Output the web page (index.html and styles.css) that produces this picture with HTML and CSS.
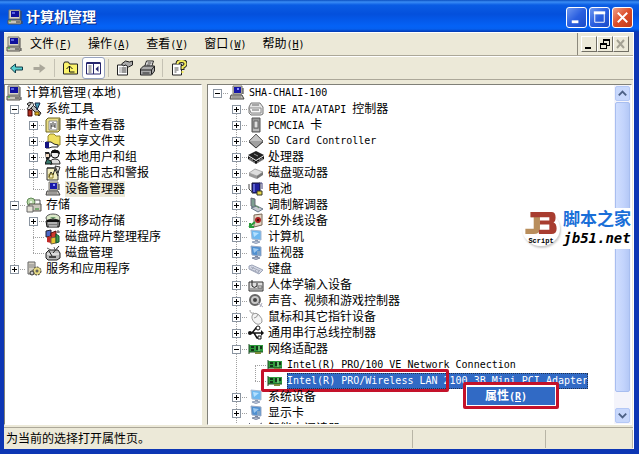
FILE: index.html
```html
<!DOCTYPE html>
<html lang="zh-CN">
<head>
    <meta charset="UTF-8">
    <meta name="viewport" content="width=device-width, initial-scale=1.0">
    <title>计算机管理</title>
    <link rel="stylesheet" href="styles.css">
</head>
<body>
    <!-- Icon sprite -->
    <svg class="sprite" xmlns="http://www.w3.org/2000/svg">
        <symbol id="i-pc" viewBox="0 0 16 16">
            <path d="M2 1h11v9H2z" fill="#d8d4c8" stroke="#77746c"/><path d="M4 2h8v6H4z" fill="#10109c"/><path d="M5 3h3v2H5z" fill="#5a62e0"/>
            <path d="M1 11h13v4H1z" fill="#c9c5bb" stroke="#55524c"/><path d="M9 13h4" stroke="#333"/><path d="M2 12h2" stroke="#2a2"/><path d="M14 2v9M15 12v3" stroke="#444"/>
        </symbol>
        <symbol id="i-device" viewBox="0 0 16 16">
            <path d="M4 1h9v8H4z" fill="#d8d4c8" stroke="#77746c"/><path d="M5 2h7v6H5z" fill="#1818a8"/><path d="M8 3h2v2H8z" fill="#8a92ff"/>
            <path d="M2 10h11l2 4H1z" fill="#c4c0b8" stroke="#444"/><path d="M3 12h9" stroke="#777"/><path d="M14 3v6" stroke="#333"/>
        </symbol>
        <symbol id="i-tools" viewBox="0 0 16 16">
            <path d="M1 3l3-2 11 11-2 3z" fill="#b8b8b8" stroke="#222"/><path d="M6 1l2 3-5 5-2-1z" fill="#ddd" stroke="#333"/>
            <path d="M9 2h5l-3 7z" fill="#4aa0b8" stroke="#124"/><path d="M2 9h4v6H2z" fill="#b03020" stroke="#400"/><path d="M9 11h4v3H9z" fill="#e0b820" stroke="#640"/>
        </symbol>
        <symbol id="i-event" viewBox="0 0 16 16">
            <path d="M3 1h12v12l-2 2H1V3z" fill="#e9dd84" stroke="#6f6620"/><path d="M4 4h8v9H4z" fill="#fff" stroke="#888"/>
            <path d="M6 6v6M8 5v3M10 6v5M6 9h4" stroke="#333"/><path d="M14 2v11" stroke="#555"/>
        </symbol>
        <symbol id="i-share" viewBox="0 0 16 16">
            <path d="M3 3l2-2h4l2 2h4v9H3z" fill="#f0e060" stroke="#94862a"/><path d="M1 9h5l3 2 4 1v2H7l-3 1H1z" fill="#fff" stroke="#222"/><path d="M0 9h4v6H0z" fill="#141480"/>
        </symbol>
        <symbol id="i-users" viewBox="0 0 16 16">
            <circle cx="10" cy="5" r="4" fill="#eee" stroke="#111"/><path d="M6 4q1-4 5-3 4 0 4 4l-3-1z" fill="#111"/><path d="M5 15q0-5 5-5 5 0 5 5z" fill="#ddd" stroke="#222"/>
            <path d="M0 3h4l2 4-2 3H1z" fill="#222"/><path d="M1 5h3v3H1z" fill="#f3d9c0"/><path d="M0 15l2-5 4 2 1 3z" fill="#38786c" stroke="#111"/>
        </symbol>
        <symbol id="i-perf" viewBox="0 0 16 16">
            <path d="M2 3h11v12H2z" fill="#f4eec0" stroke="#333"/><path d="M3 2v2M5 2v2M7 2v2M9 2v2M11 2v2" stroke="#222"/>
            <path d="M4 12l2-5 2 3 2-6 3 7" fill="none" stroke="#222"/><path d="M10 1l5 1-2 6z" fill="#ddd" stroke="#333"/><path d="M4 9h4v4H4z" fill="none" stroke="#8a7a20"/>
        </symbol>
        <symbol id="i-storage" viewBox="0 0 16 16">
            <circle cx="5" cy="5" r="4" fill="#b9d9a8" stroke="#628a58"/><circle cx="5" cy="5" r="1" fill="#fff"/>
            <path d="M3 7h12v7H3z" fill="#cbc8bd" stroke="#55524c"/><path d="M1 9h6v6H1z" fill="#e4e1d6" stroke="#666"/><path d="M9 12h4" stroke="#282"/><path d="M8 3h6v4" stroke="#555" fill="none"/>
        </symbol>
        <symbol id="i-removable" viewBox="0 0 16 16">
            <ellipse cx="8" cy="5" rx="7" ry="4" fill="#dce8c8" stroke="#555"/><path d="M5 4h6l-3 2z" fill="#6ca06c"/><path d="M1 8q7-4 14 0l-1 6H2z" fill="#777" stroke="#111"/><path d="M3 10h9M4 13h8" stroke="#eee"/><path d="M2 8h12" stroke="#111" stroke-width="2"/>
        </symbol>
        <symbol id="i-defrag" viewBox="0 0 16 16">
            <path d="M1 2l5-1v6l-5 1z" fill="#4d69c8" stroke="#223"/><path d="M6 4l5-2v6l-5 1z" fill="#cf3a2c" stroke="#511"/><path d="M2 8l4-1v7l-4-1z" fill="#c02a28"/>
            <path d="M6 9l5-1v6l-5 1z" fill="#e8c630" stroke="#764"/><path d="M11 5l3 2v6l-3 1z" fill="#3c9a4c" stroke="#153"/><path d="M13 1v3M12 3h3" stroke="#555"/>
        </symbol>
        <symbol id="i-disk" viewBox="0 0 16 16">
            <path d="M1 8l3-3h9l2 3v5l-3 2H3l-2-2z" fill="#bbb" stroke="#222"/><path d="M2 9h12" stroke="#fff"/><path d="M4 6l3 5M14 1l-6 7" stroke="#222"/><path d="M2 3l4 2M9 2l1 3" stroke="#666"/><path d="M4 12h7" stroke="#444" stroke-width="2"/>
        </symbol>
        <symbol id="i-service" viewBox="0 0 16 16">
            <path d="M2 1h7v12H2z" fill="#d4d0c4" stroke="#666"/><path d="M3 4h5M3 6h5" stroke="#888"/>
            <circle cx="11" cy="10" r="4" fill="#e6da84" stroke="#333" stroke-dasharray="2 1"/><circle cx="11" cy="10" r="1" fill="#fff" stroke="#333"/><circle cx="6" cy="12" r="2" fill="#ccc" stroke="#333"/>
        </symbol>
        <symbol id="i-ide" viewBox="0 0 16 16">
            <path d="M3 2h9l3 4v7l-2 1H3l-2-2V6z" fill="#e4e4e4" stroke="#777"/><path d="M1 7h12v5H3z" fill="#f8f8f8" stroke="#888"/><path d="M4 4h7M4 9h7" stroke="#666"/>
        </symbol>
        <symbol id="i-pcmcia" viewBox="0 0 16 16">
            <path d="M4 1h8v14H4z" fill="#989898" stroke="#555"/><path d="M6 4h4v7H6z" fill="#ddd" stroke="#666"/><path d="M5 13h6" stroke="#ddd"/>
        </symbol>
        <symbol id="i-sd" viewBox="0 0 16 16">
            <path d="M8 1l7 7-7 7-7-7z" fill="#a0a0a0" stroke="#666"/><path d="M8 2l6 6H2z" fill="#c4c4c4"/><path d="M1 9l7 6 7-6" fill="none" stroke="#444"/>
        </symbol>
        <symbol id="i-cpu" viewBox="0 0 16 16">
            <path d="M8 2l8 4-8 5-8-5z" fill="#222"/><path d="M0 7l8 5 8-5v3l-8 5-8-5z" fill="#111"/><path d="M2 9v3M4 10v3M6 12v2M10 12v2M12 10v3M14 9v3" stroke="#bbb"/><path d="M6 5l4 2" stroke="#999"/>
        </symbol>
        <symbol id="i-drive" viewBox="0 0 16 16">
            <path d="M1 8l6-4 8 3-6 4z" fill="#ddd" stroke="#aaa"/><path d="M1 8l8 3v3l-8-3z" fill="#999"/><path d="M9 11l6-4v3l-6 4z" fill="#777"/>
        </symbol>
        <symbol id="i-battery" viewBox="0 0 16 16">
            <path d="M4 2h8v10H4z" fill="#20209c" stroke="#113"/><path d="M6 3v8" stroke="#98a4ff"/><path d="M1 3v5l4 4" fill="none" stroke="#444"/><path d="M9 10h5v4H9z" fill="#e8d848" stroke="#332"/><path d="M11 2h3v6" fill="none" stroke="#3c3c78"/>
        </symbol>
        <symbol id="i-modem" viewBox="0 0 16 16">
            <path d="M3 1l4 1v9l-4-2z" fill="#7c9e90" stroke="#667"/><path d="M3 11l6-2 6 3-5 3z" fill="#c4c8d0" stroke="#678"/><path d="M7 8l4 3" stroke="#585"/>
        </symbol>
        <symbol id="i-ir" viewBox="0 0 16 16">
            <path d="M6 2l8-1v11l-8 2z" fill="#e4d6c4" stroke="#765"/><circle cx="10" cy="7" r="3" fill="#a82020"/><circle cx="10" cy="7" r="1" fill="#300"/><path d="M1 14l6-5M2 10v4h4" stroke="#2a9a3a" stroke-width="2" fill="none"/>
        </symbol>
        <symbol id="i-monitor" viewBox="0 0 16 16">
            <path d="M3 1l10 1v9l-9-1z" fill="#6db8f0" stroke="#a8b8d0"/><path d="M5 3l6 1-5 4z" fill="#b4e0ff"/><path d="M7 11h3v2H7z" fill="#8a98b0"/><path d="M4 13q4-2 8 0-4 3-8 0z" fill="#c4cce0" stroke="#93a0b8"/>
        </symbol>
        <symbol id="i-display" viewBox="0 0 16 16">
            <path d="M3 1l10 1v9l-9-1z" fill="#4f8fd0" stroke="#98a8c4"/><path d="M5 3l6 1-5 4z" fill="#9cc8f0"/><path d="M9 6h3v4H9z" fill="#7fa4c8"/><path d="M7 11h3v2H7z" fill="#78859c"/><path d="M4 13q4-2 8 0-4 3-8 0z" fill="#b8c0d4" stroke="#808ca4"/>
        </symbol>
        <symbol id="i-keyboard" viewBox="0 0 16 16">
            <path d="M1 5l3-1 11 5-4 4L1 8z" fill="#d4d8e4" stroke="#9ca4b8"/><path d="M3 6l9 4M2 8l9 4M6 6l-2 2M9 8l-2 2M12 9l-2 2" stroke="#a4aabb"/>
        </symbol>
        <symbol id="i-hid" viewBox="0 0 16 16">
            <path d="M1 5h14v9H1z" fill="#ddd" stroke="#333"/><path d="M2 12h12" stroke="#666"/><path d="M4 3v6q2 3 5 0V6" fill="none" stroke="#222"/><path d="M10 9h4v2h-4z" fill="#fff" stroke="#666"/>
        </symbol>
        <symbol id="i-sound" viewBox="0 0 16 16">
            <circle cx="7" cy="7" r="5" fill="#c8c8c8" stroke="#666" stroke-width="2"/><circle cx="7" cy="7" r="2" fill="#444"/><path d="M10 10l5 4M12 14l2-4" stroke="#aab"/>
        </symbol>
        <symbol id="i-mouse" viewBox="0 0 16 16">
            <path d="M5 5q3-2 6 1 4 4 3 7-3 4-7 1-5-5-2-9z" fill="#f4f4f4" stroke="#999"/><path d="M6 9q3 0 4-4M6 4Q2 5 2 1" fill="none" stroke="#999"/>
        </symbol>
        <symbol id="i-usb" viewBox="0 0 16 16">
            <path d="M1 8h13M4 8l4-5h3M6 8l3 5h3" fill="none" stroke="#111" stroke-width="1.5"/><path d="M13 5l3 3-3 3z" fill="#111"/><circle cx="2" cy="8" r="2" fill="#111"/><circle cx="10" cy="3" r="2" fill="#fff" stroke="#111"/><path d="M10 11h3v3h-3z" fill="#fff" stroke="#111"/>
        </symbol>
        <symbol id="i-nic" viewBox="0 0 16 16">
            <path d="M1 4h14v7H1z" fill="#2e9a3c"/><path d="M1 3v10M1 11h14" stroke="#1d4a22"/><path d="M3 5h3v2H3zM8 5h2v4H8zM12 5h2v3h-2zM3 8h3v2H3z" fill="#15351a"/><path d="M7 11h6v2H7z" fill="#7c8c3c"/><path d="M11 5v5" stroke="#9fe0a0"/>
        </symbol>
        <symbol id="i-card" viewBox="0 0 16 16">
            <path d="M1 2l5 5 8-5M5 3l6 7M2 8h9" fill="none" stroke="#667"/>
        </symbol>
    </svg>

    <div class="window">
        <!-- Title bar -->
        <header class="title-bar">
            <svg class="icon"><use href="#i-pc"/></svg>
            <h1>计算机管理</h1>
            <div class="caption-buttons">
                <button class="caption" aria-label="最小化"><svg viewBox="0 0 20 20"><path d="M5 13h7v3H5z" fill="#fff"/></svg></button>
                <button class="caption" aria-label="最大化"><svg viewBox="0 0 20 20"><path d="M5 6h10v9H5z" fill="none" stroke="#fff"/><path d="M4 5h12" stroke="#fff" stroke-width="3"/></svg></button>
                <button class="caption close" aria-label="关闭"><svg viewBox="0 0 20 20"><path d="M5 5l10 10M15 5L5 15" stroke="#fff" stroke-width="2"/></svg></button>
            </div>
        </header>

        <div class="frame">
            <!-- Menu bar -->
            <nav class="menu-bar">
                <svg class="icon"><use href="#i-pc"/></svg>
                <button>文件<span class="en">(<u>F</u>)</span></button>
                <button>操作<span class="en">(<u>A</u>)</span></button>
                <button>查看<span class="en">(<u>V</u>)</span></button>
                <button>窗口<span class="en">(<u>W</u>)</span></button>
                <button>帮助<span class="en">(<u>H</u>)</span></button>
                <div class="child-buttons">
                    <button aria-label="最小化子窗口"><svg viewBox="0 0 14 14"><path d="M3 10h6v2H3z"/></svg></button>
                    <button aria-label="还原子窗口"><svg viewBox="0 0 14 14"><path d="M5 2h7v2H5zM2 6h7v2H2z"/><path d="M11 3h1v6H9V8h2zM5 3h1v3H5zM2 7h1v5H2zM8 7h1v5H8zM2 11h7v1H2z"/></svg></button>
                    <button aria-label="关闭子窗口" disabled><svg viewBox="0 0 14 14"><path d="M3 3l7 8M10 3l-7 8" stroke="#a5a294" stroke-width="2"/></svg></button>
                </div>
            </nav>

            <!-- Toolbar -->
            <div class="toolbar">
                <button aria-label="后退"><svg viewBox="0 0 16 16"><path d="M2 8l5-4v3h7v3H7v3z" fill="#58d0d0" stroke="#123c48"/></svg></button>
                <button aria-label="前进" disabled><svg viewBox="0 0 16 16"><path d="M2 7h6V4l6 4-6 5v-3H2z" fill="#aaa79a"/></svg></button>
                <i class="divider"></i>
                <button aria-label="向上"><svg viewBox="0 0 16 16"><path d="M1 4l1-2h4l1 2h8v10H1z" fill="#fbf36c" stroke="#222"/><path d="M4 9l3-3 3 3M7 6v6h5" fill="none" stroke="#111"/></svg></button>
                <button class="pressed" aria-label="显示/隐藏控制台树"><svg viewBox="0 0 16 16"><path d="M1 3h14v11H1z" fill="#fff" stroke="#26266c"/><path d="M1 3h14" stroke="#26266c" stroke-width="2"/><path d="M8 3v11" stroke="#26266c"/><path d="M3 6h3M3 8h3M3 10h3M3 12h3" stroke="#555"/><path d="M13 6v6l-3-3z" fill="#26266c"/></svg></button>
                <i class="divider"></i>
                <button aria-label="属性"><svg viewBox="0 0 16 16"><path d="M1 5h10v10H1z" fill="#fff" stroke="#222"/><path d="M3 8h1M5 8h5M3 10h1M5 10h5M3 12h1M5 12h5" stroke="#333"/><path d="M5 4l4-3 4 1 3-1v4l-4 2-3-2-2 1z" fill="#aaa" stroke="#222"/></svg></button>
                <button aria-label="打印"><svg viewBox="0 0 16 16"><path d="M5 7l2-6h7l-2 6z" fill="#fff" stroke="#222"/><path d="M1 9l3-3h11v5l-3 4H1z" fill="#aaa" stroke="#222"/><path d="M1 10h11l3-4M12 10v4M3 13h7M8 3h4M7 5h4" fill="none" stroke="#222"/></svg></button>
                <i class="divider"></i>
                <button aria-label="帮助"><svg viewBox="0 0 16 16"><path d="M2 4h9v11H2z" fill="#fff" stroke="#222"/><path d="M4 8h4M4 10h4M4 12h2" stroke="#555"/><path d="M7 4q0-3 4-3 4 0 4 3 0 2-3 3v3" fill="none" stroke="#222" stroke-width="4"/><path d="M7 4q0-3 4-3 4 0 4 3 0 2-3 3v2M12 11v2" fill="none" stroke="#f4ec5c" stroke-width="2"/></svg></button>
            </div>

            <main class="panes">
                <!-- Console tree -->
                <section class="pane console">
                    <div class="row root"><svg class="icon"><use href="#i-pc"/></svg><span class="label">计算机管理<span class="en">(</span>本地<span class="en">)</span></span></div>
                    <ul class="tree">
                        <li>
                            <div class="row"><button class="toggle open" aria-label="折叠"></button><svg class="icon"><use href="#i-tools"/></svg><span class="label">系统工具</span></div>
                            <ul>
                                <li><div class="row"><button class="toggle" aria-label="展开"></button><svg class="icon"><use href="#i-event"/></svg><span class="label">事件查看器</span></div></li>
                                <li><div class="row"><button class="toggle" aria-label="展开"></button><svg class="icon"><use href="#i-share"/></svg><span class="label">共享文件夹</span></div></li>
                                <li><div class="row"><button class="toggle" aria-label="展开"></button><svg class="icon"><use href="#i-users"/></svg><span class="label">本地用户和组</span></div></li>
                                <li><div class="row"><button class="toggle" aria-label="展开"></button><svg class="icon"><use href="#i-perf"/></svg><span class="label">性能日志和警报</span></div></li>
                                <li><div class="row leaf"><svg class="icon"><use href="#i-device"/></svg><span class="label current">设备管理器</span></div></li>
                            </ul>
                        </li>
                        <li>
                            <div class="row"><button class="toggle open" aria-label="折叠"></button><svg class="icon"><use href="#i-storage"/></svg><span class="label">存储</span></div>
                            <ul>
                                <li><div class="row"><button class="toggle" aria-label="展开"></button><svg class="icon"><use href="#i-removable"/></svg><span class="label">可移动存储</span></div></li>
                                <li><div class="row leaf"><svg class="icon"><use href="#i-defrag"/></svg><span class="label">磁盘碎片整理程序</span></div></li>
                                <li><div class="row leaf"><svg class="icon"><use href="#i-disk"/></svg><span class="label">磁盘管理</span></div></li>
                            </ul>
                        </li>
                        <li><div class="row"><button class="toggle" aria-label="展开"></button><svg class="icon"><use href="#i-service"/></svg><span class="label">服务和应用程序</span></div></li>
                    </ul>
                </section>

                <!-- Device tree -->
                <section class="pane devices">
                    <ul class="tree">
                        <li>
                            <div class="row"><button class="toggle open" aria-label="折叠"></button><svg class="icon"><use href="#i-device"/></svg><span class="label en">SHA-CHALI-100</span></div>
                            <ul>
                                <li><div class="row"><button class="toggle" aria-label="展开"></button><svg class="icon"><use href="#i-ide"/></svg><span class="label"><span class="en">IDE ATA/ATAPI </span>控制器</span></div></li>
                                <li><div class="row"><button class="toggle" aria-label="展开"></button><svg class="icon"><use href="#i-pcmcia"/></svg><span class="label"><span class="en">PCMCIA </span>卡</span></div></li>
                                <li><div class="row"><button class="toggle" aria-label="展开"></button><svg class="icon"><use href="#i-sd"/></svg><span class="label en">SD Card Controller</span></div></li>
                                <li><div class="row"><button class="toggle" aria-label="展开"></button><svg class="icon"><use href="#i-cpu"/></svg><span class="label">处理器</span></div></li>
                                <li><div class="row"><button class="toggle" aria-label="展开"></button><svg class="icon"><use href="#i-drive"/></svg><span class="label">磁盘驱动器</span></div></li>
                                <li><div class="row"><button class="toggle" aria-label="展开"></button><svg class="icon"><use href="#i-battery"/></svg><span class="label">电池</span></div></li>
                                <li><div class="row"><button class="toggle" aria-label="展开"></button><svg class="icon"><use href="#i-modem"/></svg><span class="label">调制解调器</span></div></li>
                                <li><div class="row"><button class="toggle" aria-label="展开"></button><svg class="icon"><use href="#i-ir"/></svg><span class="label">红外线设备</span></div></li>
                                <li><div class="row"><button class="toggle" aria-label="展开"></button><svg class="icon"><use href="#i-monitor"/></svg><span class="label">计算机</span></div></li>
                                <li><div class="row"><button class="toggle" aria-label="展开"></button><svg class="icon"><use href="#i-display"/></svg><span class="label">监视器</span></div></li>
                                <li><div class="row"><button class="toggle" aria-label="展开"></button><svg class="icon"><use href="#i-keyboard"/></svg><span class="label">键盘</span></div></li>
                                <li><div class="row"><button class="toggle" aria-label="展开"></button><svg class="icon"><use href="#i-hid"/></svg><span class="label">人体学输入设备</span></div></li>
                                <li><div class="row"><button class="toggle" aria-label="展开"></button><svg class="icon"><use href="#i-sound"/></svg><span class="label">声音、视频和游戏控制器</span></div></li>
                                <li><div class="row"><button class="toggle" aria-label="展开"></button><svg class="icon"><use href="#i-mouse"/></svg><span class="label">鼠标和其它指针设备</span></div></li>
                                <li><div class="row"><button class="toggle" aria-label="展开"></button><svg class="icon"><use href="#i-usb"/></svg><span class="label">通用串行总线控制器</span></div></li>
                                <li>
                                    <div class="row"><button class="toggle open" aria-label="折叠"></button><svg class="icon"><use href="#i-nic"/></svg><span class="label">网络适配器</span></div>
                                    <ul>
                                        <li><div class="row leaf"><svg class="icon"><use href="#i-nic"/></svg><span class="label en">Intel(R) PRO/100 VE Network Connection</span></div></li>
                                        <li class="target">
                                            <div class="row leaf"><svg class="icon"><use href="#i-nic"/></svg><span class="label en selected">Intel(R) PRO/Wireless LAN 2100 3B Mini PCI Adapter</span></div>
                                            <span class="highlight"></span>
                                            <div class="context-menu"><button>属性<span class="en">(<u>R</u>)</span></button></div>
                                        </li>
                                    </ul>
                                </li>
                                <li><div class="row"><button class="toggle" aria-label="展开"></button><svg class="icon"><use href="#i-monitor"/></svg><span class="label">系统设备</span></div></li>
                                <li><div class="row"><button class="toggle" aria-label="展开"></button><svg class="icon"><use href="#i-display"/></svg><span class="label">显示卡</span></div></li>
                                <li><div class="row"><button class="toggle" aria-label="展开"></button><svg class="icon"><use href="#i-card"/></svg><span class="label">智能卡阅读器</span></div></li>
                            </ul>
                        </li>
                    </ul>
                    <div class="scrollbar">
                        <button aria-label="向上滚动"><svg viewBox="0 0 14 14"><path d="M3 9l4-4 4 4" fill="none" stroke="#4d6185" stroke-width="2"/></svg></button>
                        <div class="thumb"></div>
                        <button aria-label="向下滚动"><svg viewBox="0 0 14 14"><path d="M3 5l4 4 4-4" fill="none" stroke="#4d6185" stroke-width="2"/></svg></button>
                    </div>
                    <!-- Site stamp -->
                    <div class="stamp">
                        <div class="badge">
                            <svg viewBox="0 0 30 24"><path d="M5 1h9v16q0 5-6 5H0v-5h8V6H5z" fill="#b98e5c"/><path d="M5 1h20q4 0 4 5 0 4-2 5 3 1 3 6 0 5-5 5H13v-4h10v-5h-9V9h9V6H5z" fill="#a83d30"/></svg>
                            <span>Script</span>
                        </div>
                        <div class="site"><b>脚本之家</b><em>jb51.net</em></div>
                    </div>
                </section>
            </main>

            <!-- Status bar -->
            <footer class="status-bar">
                <span>为当前的选择打开属性页。</span>
                <span></span>
                <span></span>
            </footer>
        </div>
    </div>
</body>
</html>
```
FILE: styles.css
```css
* {
    box-sizing: border-box;
}

body {
    margin: 0;
    background-color: #fff;
    color: #000;
    font-family: "Liberation Sans", "Noto Sans CJK SC", sans-serif;
    font-size: 12px;
    line-height: 16px;
}

button {
    margin: 0;
    padding: 0;
    border: none;
    background: none;
    color: inherit;
    font: inherit;
}

button svg {
    display: block;
    width: 100%;
    height: 100%;
}

ul {
    list-style: none;
    margin: 0;
    padding: 0;
}

.sprite {
    display: none;
}

.icon {
    flex: none;
    width: 16px;
    height: 16px;
}

/* Latin text is half the width of a Chinese character */
.en {
    font-family: "DejaVu Sans Mono", monospace;
    font-size: 10px;
    white-space: pre;
}

.window {
    display: flex;
    flex-direction: column;
    height: 100vh;
    padding: 0 5px 5px 4px;
    background-color: #0d36b4;
    overflow: hidden;
}

/* Title bar */
.title-bar {
    display: flex;
    align-items: center;
    flex: none;
    gap: 3px;
    height: 32px;
    margin: 0 -5px 0 -4px;
    padding: 2px 6px 0 7px;
    background: linear-gradient(#0b4fc0 0, #3a8cf5 2px, #0a5de4 5px, #0450dc 14px, #0462f6 26px, #0560f0 29px, #0338b0 32px);
    color: #fff;
}

.title-bar h1 {
    margin: 0;
    font-size: 14px;
    font-weight: bold;
    text-shadow: 1px 1px #0a2a80;
}

.caption-buttons {
    display: flex;
    gap: 2px;
    margin-left: auto;
}

.caption {
    width: 21px;
    height: 21px;
    border: 1px solid #fff;
    border-radius: 3px;
    background: linear-gradient(135deg, #6f98f0, #2a5fe0 50%, #1c4cc8);
}

.caption.close {
    background: linear-gradient(135deg, #f0a088, #dc4c28 50%, #c03a18);
}

.frame {
    display: flex;
    flex: 1;
    flex-direction: column;
    min-height: 0;
    background-color: #ece9d8;
    border-right: 1px solid #fff;
}

/* Menu bar */
.menu-bar {
    display: flex;
    align-items: center;
    flex: none;
    height: 24px;
    padding-left: 2px;
    border-top: 1px solid #fff;
    border-bottom: 1px solid #aca899;
}

.menu-bar > button {
    margin-right: 16px;
}

.menu-bar .icon {
    margin-right: 8px;
}

.child-buttons {
    display: flex;
    align-items: center;
    height: 100%;
    margin-left: auto;
    padding: 0 4px 0 3px;
    border-left: 1px solid #8c897c;
}

.child-buttons button {
    width: 16px;
    height: 16px;
    border: 1px solid;
    border-color: #fff #716f64 #716f64 #fff;
}

/* Toolbar */
.toolbar {
    display: flex;
    align-items: center;
    flex: none;
    height: 24px;
    padding-left: 1px;
    border-top: 1px solid #fff;
    border-bottom: 1px solid #aca899;
}

.toolbar button {
    width: 23px;
    height: 22px;
    padding: 3px;
}

.toolbar .pressed {
    border: 1px solid #98a4c0;
    border-radius: 3px;
    background-color: #fff;
    padding: 2px;
}

.divider {
    width: 1px;
    height: 18px;
    margin: 0 4px 0 3px;
    background-color: #c5c2b4;
}

/* Panes */
.panes {
    display: flex;
    flex: 1;
    gap: 5px;
    min-height: 0;
    padding: 4px 1px 2px 0;
}

.pane {
    border: 1px solid #808078;
    border-right-color: #fff;
    border-bottom-color: #fff;
    background-color: #fff;
    overflow: hidden;
}

.console {
    flex: 0 0 198px;
    min-width: 0;
}

.devices {
    position: relative;
    display: flex;
    flex: 1;
    min-width: 0;
}

.devices > .tree {
    flex: 1;
    min-width: 0;
}

/* Tree */
.tree ul {
    padding-left: 19px;
}

.tree li {
    position: relative;
}

/* Dotted line down from each item to its next sibling */
.tree li:not(:last-child)::before {
    content: "";
    position: absolute;
    top: 8px;
    bottom: -8px;
    left: 9px;
    border-left: 1px dotted #a0a0a0;
}

.row {
    position: relative;
    display: flex;
    align-items: center;
    height: 16px;
    white-space: nowrap;
}

.tree .row::before {
    content: "";
    position: absolute;
    left: 9px;
    width: 11px;
    border-top: 1px dotted #a0a0a0;
}

.row.root {
    padding-left: 1px;
}

.row.leaf {
    padding-left: 21px;
}

.row .label {
    margin-left: 4px;
}

.toggle {
    position: relative;
    flex: none;
    width: 9px;
    height: 9px;
    margin: 0 7px 0 5px;
    border: 1px solid #8a94a0;
    background: linear-gradient(#000, #000) center / 5px 1px no-repeat,
        linear-gradient(#000, #000) center / 1px 5px no-repeat, #fff;
}

.toggle.open {
    background: linear-gradient(#000, #000) center / 5px 1px no-repeat, #fff;
}

.current {
    background-color: #ece9d8;
}

.selected {
    background-color: #316ac5;
    color: #fff;
    outline: 1px dotted #20304c;
    outline-offset: -1px;
}

.highlight {
    position: absolute;
    top: -4px;
    left: 15px;
    width: 188px;
    height: 23px;
    border: 3px solid #c4122a;
    border-radius: 2px;
}

.context-menu {
    position: absolute;
    z-index: 1;
    top: 9px;
    left: 217px;
    width: 96px;
    padding: 2px 1px 1px;
    border: 3px solid #c4122a;
    border-radius: 2px;
    background-color: #fff;
}

.context-menu button {
    display: block;
    width: 100%;
    height: 18px;
    padding-left: 18px;
    background-color: #316ac5;
    color: #fff;
    font-weight: bold;
    text-align: left;
}

/* Scrollbar */
.scrollbar {
    display: flex;
    flex-direction: column;
    gap: 1px;
    flex: none;
    width: 17px;
    padding: 1px;
    background-color: #f4f4fb;
}

.scrollbar button {
    flex: none;
    height: 15px;
    border: 1px solid #b4c8f6;
    border-radius: 2px;
    background-color: #c8d8fc;
}

.thumb {
    flex: none;
    height: 86%;
    margin-bottom: auto;
    border: 1px solid #a8bef0;
    border-radius: 2px;
    background: linear-gradient(90deg, #d0defe, #c2d3fc 60%, #b4c8f6);
}

/* Site stamp */
.stamp {
    position: absolute;
    top: 123px;
    right: 0;
    display: flex;
    align-items: center;
    gap: 3px;
    height: 41px;
    background-color: #fff;
}

.badge {
    display: flex;
    flex-direction: column;
    align-items: center;
    width: 38px;
    border-radius: 50%;
    box-shadow: 1px 2px 2px #ccc;
}

.badge svg {
    width: 32px;
    height: 25px;
}

.badge span {
    font-family: "Liberation Mono", monospace;
    font-size: 7px;
    font-weight: bold;
    line-height: 10px;
}

.site {
    display: flex;
    flex-direction: column;
    align-items: center;
    line-height: 18px;
}

.site b {
    color: #1a6fd8;
    font-size: 17px;
}

.site em {
    font-family: "DejaVu Sans Mono", monospace;
    font-size: 14px;
    font-weight: bold;
}

/* Status bar */
.status-bar {
    display: grid;
    grid-template-columns: 1fr 133px 87px;
    align-items: center;
    flex: none;
    height: 22px;
    padding-left: 2px;
    border-top: 1px solid #aca899;
}

.status-bar span {
    height: 18px;
    border-right: 1px solid #b8b5a6;
    line-height: 18px;
}
```
